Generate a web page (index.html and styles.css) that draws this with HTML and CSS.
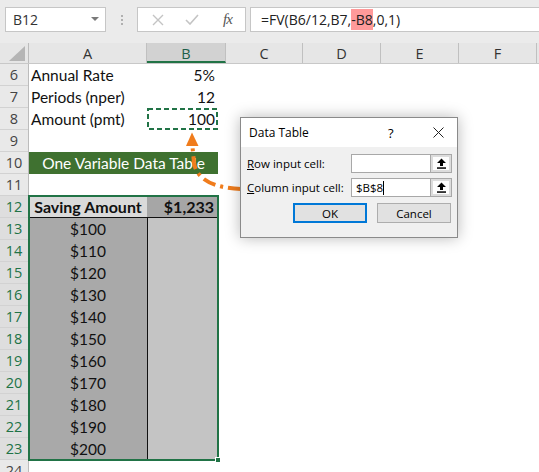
FILE: index.html
```html
<!DOCTYPE html>
<html>
<head>
<meta charset="utf-8">
<link rel="stylesheet" href="styles.css">
</head>
<body>
<div class="app">
  <div class="topbar">
    <div class="namebox">
      <span class="nb-text">B12</span>
      <svg class="nb-caret" width="8" height="5" viewBox="0 0 8 5"><polygon points="0,0 8,0 4,4" fill="#7a7a7a"/></svg>
    </div>
    <div class="grip"><i></i><i></i><i></i></div>
    <div class="fxbox">
      <svg class="fx-x" width="12" height="12" viewBox="0 0 12 12"><path d="M1 1 L11 11 M11 1 L1 11" stroke="#c4c4c4" stroke-width="1.4" fill="none"/></svg>
      <svg class="fx-ok" width="14" height="11" viewBox="0 0 14 11"><path d="M1 6 L5 10 L13 1" stroke="#c4c4c4" stroke-width="1.6" fill="none"/></svg>
      <span class="fx-label">fx</span>
    </div>
    <div class="formula">=FV(B6/12,B7,<span class="hl">-B8</span>,0,1)</div>
  </div>

  <div class="colheads">
    <div class="corner"><svg width="16" height="15" viewBox="0 0 16 15"><polygon points="0,15 16,15 16,0" fill="#b5b5b5"/></svg></div>
    <div class="ch ch-a">A</div>
    <div class="ch ch-b">B</div>
    <div class="ch ch-c">C</div>
    <div class="ch ch-d">D</div>
    <div class="ch ch-e">E</div>
    <div class="ch ch-f">F</div>
  </div>

  <div class="sheet">
    <div class="rowheads">
      <div class="rh">6</div>
      <div class="rh">7</div>
      <div class="rh">8</div>
      <div class="rh">9</div>
      <div class="rh">10</div>
      <div class="rh">11</div>
      <div class="rh sel">12</div>
      <div class="rh sel">13</div>
      <div class="rh sel">14</div>
      <div class="rh sel">15</div>
      <div class="rh sel">16</div>
      <div class="rh sel">17</div>
      <div class="rh sel">18</div>
      <div class="rh sel">19</div>
      <div class="rh sel">20</div>
      <div class="rh sel">21</div>
      <div class="rh sel">22</div>
      <div class="rh sel">23</div>
      <div class="rh">24</div>
    </div>
    <div class="cells">
      <div class="row"><div class="ca">Annual Rate</div><div class="cb">5%</div></div>
      <div class="row"><div class="ca">Periods (nper)</div><div class="cb">12</div></div>
      <div class="row"><div class="ca">Amount (pmt)</div><div class="cb ants">100<svg class="ants-svg" width="71" height="22" viewBox="0 0 71 22"><rect x="1" y="1" width="69" height="20" fill="none" stroke="#217346" stroke-width="2" stroke-dasharray="5 3"/></svg></div></div>
      <div class="row"></div>
      <div class="row"><div class="banner">One Variable Data Table</div></div>
      <div class="row"></div>
      <div class="dtable">
        <div class="drow head"><div class="da">Saving Amount</div><div class="db">$1,233</div></div>
        <div class="drow"><div class="da">$100</div><div class="db"></div></div>
        <div class="drow"><div class="da">$110</div><div class="db"></div></div>
        <div class="drow"><div class="da">$120</div><div class="db"></div></div>
        <div class="drow"><div class="da">$130</div><div class="db"></div></div>
        <div class="drow"><div class="da">$140</div><div class="db"></div></div>
        <div class="drow"><div class="da">$150</div><div class="db"></div></div>
        <div class="drow"><div class="da">$160</div><div class="db"></div></div>
        <div class="drow"><div class="da">$170</div><div class="db"></div></div>
        <div class="drow"><div class="da">$180</div><div class="db"></div></div>
        <div class="drow"><div class="da">$190</div><div class="db"></div></div>
        <div class="drow"><div class="da">$200</div><div class="db"></div></div>
        <div class="handle"></div>
      </div>
      <div class="row"></div>
    </div>
  </div>

  <svg class="arrow" width="539" height="472" viewBox="0 0 539 472">
    <path d="M241 189 C 214 188 197 180 194 163 L 192.5 147" fill="none" stroke="#f07c1c" stroke-width="4" stroke-dasharray="13 5 3 5"/>
    <polygon points="186,146 198.5,146 192,132.5" fill="#f07c1c"/>
  </svg>

  <div class="dialog">
    <div class="dlg-title">
      <span class="dlg-name">Data Table</span>
      <span class="dlg-help">?</span>
      <svg class="dlg-close" width="11" height="11" viewBox="0 0 11 11"><path d="M0.5 0.5 L10.5 10.5 M10.5 0.5 L0.5 10.5" stroke="#222" stroke-width="1" fill="none"/></svg>
    </div>
    <div class="dlg-body">
      <div class="field">
        <label class="lbl"><u>R</u>ow input cell:</label>
        <div class="inp"></div>
        <div class="pick"><span class="pick-in"><svg width="11" height="11" viewBox="0 0 11 11"><polygon points="5.5,0.5 10,5 7,5 7,8 4,8 4,5 1,5" fill="#000"/><rect x="1" y="9.3" width="9" height="1.5" fill="#000"/></svg></span></div>
      </div>
      <div class="field">
        <label class="lbl"><u>C</u>olumn input cell:</label>
        <div class="inp">$B$8<span class="caret"></span></div>
        <div class="pick"><span class="pick-in"><svg width="11" height="11" viewBox="0 0 11 11"><polygon points="5.5,0.5 10,5 7,5 7,8 4,8 4,5 1,5" fill="#000"/><rect x="1" y="9.3" width="9" height="1.5" fill="#000"/></svg></span></div>
      </div>
      <div class="btns">
        <div class="btn primary">OK</div>
        <div class="btn">Cancel</div>
      </div>
    </div>
  </div>
</div>
</body>
</html>
```

FILE: styles.css
```css
* { box-sizing: border-box; }
html, body { margin: 0; padding: 0; }
body {
  width: 539px;
  height: 472px;
  overflow: hidden;
  background: #fff;
  font-family: "Open Sans", "Noto Sans", sans-serif;
}
.app {
  position: relative;
  width: 539px;
  height: 472px;
  overflow: hidden;
}

/* ---------- top bar ---------- */
.topbar {
  height: 43px;
  background: #ebebeb;
  display: flex;
  align-items: flex-start;
  padding: 7px 0 0 5px;
}
.namebox {
  width: 101px;
  height: 25px;
  background: #fff;
  border: 1px solid #c6c6c6;
  display: flex;
  align-items: center;
  padding: 0 6px 0 7px;
}
.nb-text {
  flex: 1;
  font-family: "Open Sans", sans-serif;
  font-size: 14px;
  color: #333;
}
.grip {
  width: 31px;
  height: 25px;
  display: flex;
  flex-direction: column;
  align-items: center;
  justify-content: center;
  gap: 2px;
}
.grip i {
  display: block;
  width: 2px;
  height: 2px;
  background: #b0b0b0;
}
.fxbox {
  width: 109px;
  height: 25px;
  background: #fff;
  border: 1px solid #c6c6c6;
  display: flex;
  align-items: center;
  padding-left: 14px;
}
.fx-x { margin-right: 21px; }
.fx-ok { margin-right: 24px; }
.fx-label {
  font-family: "Liberation Serif", serif;
  font-style: italic;
  font-size: 15px;
  color: #555;
  letter-spacing: -1px;
}
.formula {
  margin-left: 4px;
  flex: 1;
  height: 25px;
  background: #fff;
  border: 1px solid #c6c6c6;
  border-right: none;
  display: flex;
  align-items: center;
  padding-left: 10px;
  font-family: "Open Sans", sans-serif;
  font-size: 14px;
  color: #222;
  white-space: pre;
}
.hl {
  background: #ff9a9a;
  display: inline-block;
  height: 21px;
  line-height: 21px;
}

/* ---------- column headers ---------- */
.colheads {
  display: flex;
  height: 21px;
  background: #e6e6e6;
  border-bottom: 1px solid #c8c8c8;
}
.corner {
  width: 29px;
  border-right: 1px solid #bcbcbc;
  display: flex;
  align-items: flex-end;
  justify-content: flex-end;
  padding: 0 3px 2px 0;
}
.ch {
  display: flex;
  align-items: center;
  justify-content: center;
  border-right: 1px solid #c0c0c0;
  font-family: "Open Sans", sans-serif;
  font-size: 14.5px;
  color: #333;
}
.ch-a { width: 118px; }
.ch-b { width: 79px; background: #d2d2d2; border-bottom: 2px solid #217346; color: #1d5e48; padding-top: 2px; }
.ch-c { width: 77px; }
.ch-d { width: 78px; }
.ch-e { width: 78px; }
.ch-f { width: 78px; }

/* ---------- sheet ---------- */
.sheet {
  display: flex;
  font-family: "Lato", sans-serif;
  font-size: 15.5px;
  color: #111;
}
.rowheads {
  width: 29px;
  flex: none;
  background: #e9e9e9;
  border-right: 1px solid #bcbcbc;
}
.rh {
  height: 22px;
  border-bottom: 1px solid #d2d2d2;
  display: flex;
  align-items: center;
  justify-content: center;
  font-family: "Open Sans", sans-serif;
  font-size: 14.5px;
  color: #444;
}
.rh.sel {
  background: #dedede;
  color: #217346;
}
.cells { width: 510px; }
.row {
  height: 22px;
  display: flex;
  align-items: center;
}
.ca {
  width: 118px;
  padding-left: 2px;
  white-space: nowrap;
}
.cb {
  width: 71px;
  height: 22px;
  text-align: right;
  padding-right: 3px;
  line-height: 22px;
}
.ants { position: relative; }
.ants-svg {
  position: absolute;
  left: 0;
  top: 0;
}
.banner {
  width: 189px;
  height: 22px;
  background: #3f7130;
  color: #fff;
  text-align: center;
  line-height: 22px;
}

.dtable {
  position: relative;
  width: 189px;
  outline: 2px solid #217346;
  outline-offset: -1px;
}
.drow {
  display: flex;
  height: 22px;
}
.da {
  width: 118px;
  background: #a9a9a9;
  text-align: center;
  line-height: 22px;
}
.db {
  width: 71px;
  background: #c4c4c4;
  border-left: 1px solid #111;
  text-align: right;
  padding-right: 4px;
  line-height: 22px;
}
.drow.head {
  border-bottom: 1px solid #111;
  font-weight: bold;
  font-size: 16px;
}
.drow.head .da { background: #dadada; line-height: 21px; }
.drow.head .db { background: #a6a6a6; border-left: none; line-height: 21px; }
.handle {
  position: absolute;
  right: -3px;
  bottom: -3px;
  width: 6px;
  height: 6px;
  background: #217346;
  border: 1px solid #fff;
}

/* ---------- arrow overlay ---------- */
.arrow {
  position: absolute;
  left: 0;
  top: 0;
  pointer-events: none;
}

/* ---------- dialog ---------- */
.dialog {
  position: absolute;
  left: 240px;
  top: 117px;
  width: 218px;
  height: 121px;
  border: 1px solid #8a8a8a;
  background: #f0f0f0;
  box-shadow: 0 0 14px rgba(0, 0, 0, 0.28);
  font-family: "Open Sans", sans-serif;
  font-size: 11.5px;
  color: #000;
}
.dlg-title {
  height: 29px;
  background: #fff;
  display: flex;
  align-items: center;
  padding-left: 8px;
}
.dlg-name { flex: 1; font-size: 12px; }
.dlg-help { width: 20px; font-size: 13px; margin-right: 25px; }
.dlg-close { margin-right: 13px; }
.dlg-body {
  padding: 7px 0 0 6px;
}
.field {
  display: flex;
  height: 19px;
  margin-bottom: 5px;
  align-items: stretch;
}
.lbl {
  width: 104px;
  display: flex;
  align-items: center;
}
.inp {
  width: 79px;
  background: #fff;
  border: 1px solid #a8a8a8;
  border-right: none;
  display: flex;
  align-items: center;
  padding-left: 4px;
  font-size: 11.5px;
}
.caret {
  display: inline-block;
  width: 1px;
  height: 14px;
  background: #000;
}
.pick {
  width: 22px;
  background: #dcdcdc;
  border: 1px solid #a8a8a8;
  padding: 2px;
}
.pick-in {
  display: flex;
  width: 100%;
  height: 100%;
  background: #fdfdfd;
  align-items: center;
  justify-content: center;
}
.btns {
  display: flex;
  gap: 10px;
  margin-top: 6px;
  padding-left: 46px;
}
.btn {
  width: 74px;
  height: 20px;
  background: #e1e1e1;
  border: 1px solid #adadad;
  display: flex;
  align-items: center;
  justify-content: center;
}
.btn.primary {
  border: 2px solid #0078d7;
}
```
